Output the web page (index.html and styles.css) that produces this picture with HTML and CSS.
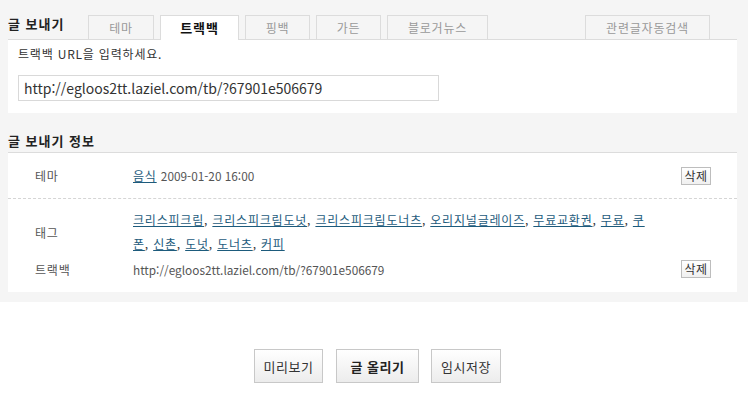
FILE: index.html
```html
<!DOCTYPE html>
<html lang="ko">
<head>
<meta charset="utf-8">
<title>글 보내기</title>
<link rel="stylesheet" href="styles.css">
</head>
<body>
<div class="top">
  <div class="tabbar">
    <h2 class="title">글 보내기</h2>
    <ul class="tabs">
      <li class="tab tab-w66">테마</li>
      <li class="tab tab-active">트랙백</li>
      <li class="tab tab-w65">핑백</li>
      <li class="tab tab-w65">가든</li>
      <li class="tab tab-w101">블로거뉴스</li>
      <li class="tab tab-right">관련글자동검색</li>
    </ul>
  </div>
  <div class="panel panel-url">
    <p class="hint">트랙백 URL을 입력하세요.</p>
    <div class="url-input">http://egloos2tt.laziel.com/tb/?67901e506679</div>
  </div>
  <h2 class="title section-title">글 보내기 정보</h2>
  <div class="panel panel-info">
    <div class="row row-theme">
      <div class="label">테마</div>
      <div class="value"><a class="link" href="#">음식</a> <span class="small">2009-01-20 16:00</span></div>
      <button class="del">삭제</button>
    </div>
    <div class="row-group">
      <div class="row row-tags">
        <div class="label">태그</div>
        <div class="value tags"><a class="link" href="#">크리스피크림</a>, <a class="link" href="#">크리스피크림도넛</a>, <a class="link" href="#">크리스피크림도너츠</a>, <a class="link" href="#">오리지널글레이즈</a>, <a class="link" href="#">무료교환권</a>, <a class="link" href="#">무료</a>, <a class="link" href="#">쿠<br>폰</a>, <a class="link" href="#">신촌</a>, <a class="link" href="#">도넛</a>, <a class="link" href="#">도너츠</a>, <a class="link" href="#">커피</a></div>
        <div></div>
      </div>
      <div class="row row-tb">
        <div class="label">트랙백</div>
        <div class="value small">http://egloos2tt.laziel.com/tb/?67901e506679</div>
        <button class="del">삭제</button>
      </div>
    </div>
  </div>
</div>
<div class="actions">
  <button class="btn btn-preview">미리보기</button>
  <button class="btn btn-main">글 올리기</button>
  <button class="btn btn-save">임시저장</button>
</div>
</body>
</html>
```
FILE: styles.css
```css
* { box-sizing: border-box; }
html, body { margin: 0; padding: 0; background: #fff; }
body {
  font-family: "Noto Sans CJK KR", "Noto Sans", sans-serif;
  font-size: 12px;
  letter-spacing: 0.8px;
  color: #333;
}
.top {
  background: #f5f5f5;
  padding-bottom: 10px;
}
.tabbar {
  display: flex;
  align-items: flex-end;
  height: 39px;
  padding-left: 8px;
  padding-right: 38px;
}
.title {
  margin: 0;
  font-size: 13px;
  font-weight: bold;
  letter-spacing: 1px;
  color: #222;
  line-height: 16px;
}
.tabbar .title {
  width: 80px;
  align-self: flex-start;
  margin-top: 16px;
}
.tabs {
  display: flex;
  flex: 1;
  gap: 6px;
  list-style: none;
  margin: 0;
  padding: 0;
  align-items: flex-end;
}
.tab {
  height: 24px;
  padding: 0;
  border: 1px solid #dcdcdc;
  border-bottom: none;
  background: #f5f5f5;
  color: #999;
  font-size: 12px;
  line-height: 23px;
  text-align: center;
}
.tab-w66 { width: 66px; }
.tab-w65 { width: 65px; }
.tab-w101 { width: 101px; }
.tab-active {
  position: relative;
  z-index: 1;
  width: 79px;
  height: 25px;
  margin-bottom: -1px;
  background: #fff;
  color: #111;
  font-weight: bold;
  font-size: 13px;
}
.tab-right { margin-left: auto; width: 125px; }
.panel {
  background: #fff;
  margin: 0 11px 0 8px;
  border-top: 1px solid #dcdcdc;
}
.panel-url {
  height: 74px;
  padding: 6px 10px 0;
}
.hint {
  margin: 0;
  line-height: 16px;
  font-size: 12px;
  color: #333;
}
.url-input {
  margin-top: 13px;
  width: 421px;
  height: 26px;
  border: 1px solid #d9d9d9;
  padding: 0 5px;
  font-size: 14px;
  letter-spacing: 0;
  line-height: 24px;
  color: #333;
  background: #fff;
}
.section-title {
  padding: 20px 8px 3px;
}
.row {
  display: grid;
  grid-template-columns: 98px 1fr auto;
  align-items: center;
  padding: 0 26px 0 27px;
}
.label { color: #555; font-size: 12px; }
.row-theme {
  height: 46px;
  border-bottom: 1px dashed #d5d5d5;
}
.row-group { padding: 9px 0 10px; }
.tags { line-height: 24px; }
.row-tb { height: 26px; }
.link { color: #1d5b7c; text-decoration: underline; }
.small { font-size: 11.8px; letter-spacing: 0; color: #555; }
.del {
  font-family: inherit;
  font-size: 12px;
  letter-spacing: 0.5px;
  color: #333;
  height: 18px;
  width: 30px;
  padding: 0;
  line-height: 16px;
  border: 1px solid #bdbdbd;
  background: linear-gradient(#fff, #f0f0f0);
}
.actions {
  display: flex;
  justify-content: center;
  gap: 12px;
  padding: 47px 0 0 7px;
}
.btn {
  font-family: inherit;
  font-size: 13px;
  letter-spacing: 0.5px;
  color: #333;
  height: 34px;
  padding: 0;
  border: 1px solid #c8c8c8;
  background: linear-gradient(#fff, #ececec);
}
.btn-preview { width: 69px; }
.btn-main { width: 83px; margin-left: 1px; font-weight: bold; color: #222; }
.btn-save { width: 70px; }
```
